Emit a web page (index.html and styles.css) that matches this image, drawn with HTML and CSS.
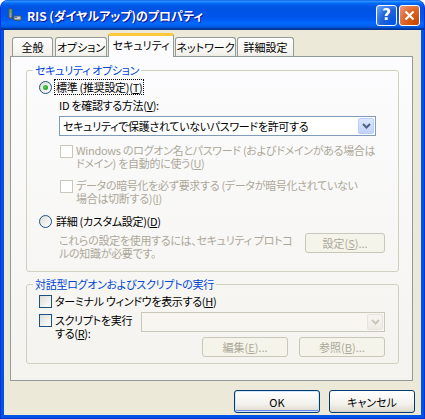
FILE: index.html
```html
<!DOCTYPE html>
<html lang="ja">
<head>
<meta charset="UTF-8" />
<meta name="viewport" content="width=device-width, initial-scale=1.0">
<title>RIS (ダイヤルアップ)のプロパティ</title>
<link rel="stylesheet" href="styles.css">
</head>
<body>
<div class="window">
  <div class="titlebar">
    <svg class="app-icon" width="16" height="16" viewBox="0 0 16 16">
      <path d="M2 2h3v9H2z" fill="#9aa7a0" stroke="#4b5a55" stroke-width="1"/>
      <path d="M3 3h1v3H3z" fill="#3fbf3f"/>
      <path d="M5 11c2 0 2 2 4 2h5" fill="none" stroke="#4b5a55" stroke-width="1"/>
      <path d="M7 9h7v4H7z" fill="#c9d0cc" stroke="#4b5a55" stroke-width="1"/>
      <path d="M8 10h2v1H8z" fill="#3a6fd8"/>
    </svg>
    <span class="title">RIS (ダイヤルアップ)のプロパティ</span>
    <div class="caption-btns">
      <button class="cap help">?</button>
      <button class="cap close">
        <svg width="11" height="11" viewBox="0 0 11 11"><path d="M1.5 1.5l8 8M9.5 1.5l-8 8" stroke="#fff" stroke-width="2.2"/></svg>
      </button>
    </div>
  </div>

  <div class="client">
    <div class="tabs">
      <div class="tab t1">全般</div>
      <div class="tab t2">オプション</div>
      <div class="tab t3 selected">セキュリティ</div>
      <div class="tab t4">ネットワーク</div>
      <div class="tab t5">詳細設定</div>
    </div>

    <div class="panel">
      <fieldset class="group g1">
        <legend>セキュリティ オプション</legend>
        <label class="radio-row">
          <span class="radio checked"></span>
          <span class="focus">標準 (推奨設定)(<u>T</u>)</span>
        </label>
        <div class="field-label">ID を確認する方法(<u>V</u>):</div>
        <div class="select">
          <span class="select-text">セキュリティで保護されていないパスワードを許可する</span>
          <span class="drop">
            <svg width="9" height="6" viewBox="0 0 9 6"><path d="M1 1l3.5 3.5L8 1" fill="none" stroke="#4d6185" stroke-width="2"/></svg>
          </span>
        </div>
        <div class="check-row disabled c1">
          <span class="box"></span>
          <span class="check-text">Windows のログオン名とパスワード (およびドメインがある場合は<br>ドメイン) を自動的に使う(<u>U</u>)</span>
        </div>
        <div class="check-row disabled c2">
          <span class="box"></span>
          <span class="check-text">データの暗号化を必ず要求する (データが暗号化されていない<br>場合は切断する)(<u>I</u>)</span>
        </div>
        <label class="radio-row r2">
          <span class="radio"></span>
          <span class="plain">詳細 (カスタム設定)(<u>D</u>)</span>
        </label>
        <div class="adv">
          <p class="note">これらの設定を使用するには、セキュリティ プロトコ<br>ルの知識が必要です。</p>
          <button class="btn small" disabled>設定(<u>S</u>)...</button>
        </div>
      </fieldset>

      <fieldset class="group g2">
        <legend>対話型ログオンおよびスクリプトの実行</legend>
        <div class="check-row single">
          <span class="box"></span>
          <span class="check-text">ターミナル ウィンドウを表示する(<u>H</u>)</span>
        </div>
        <div class="script-row">
          <div class="check-row script">
            <span class="box"></span>
            <span class="check-text">スクリプトを実行<br>する(<u>R</u>):</span>
          </div>
          <div class="script-side">
            <div class="select off">
              <span class="select-text"></span>
              <span class="drop">
                <svg width="9" height="6" viewBox="0 0 9 6"><path d="M1 1l3.5 3.5L8 1" fill="none" stroke="#c9c7ba" stroke-width="2"/></svg>
              </span>
            </div>
            <div class="side-btns">
              <button class="btn small" disabled>編集(<u>E</u>)...</button>
              <button class="btn small" disabled>参照(<u>B</u>)...</button>
            </div>
          </div>
        </div>
      </fieldset>
    </div>

    <div class="footer">
      <button class="btn default">OK</button>
      <button class="btn">キャンセル</button>
    </div>
  </div>
</div>
</body>
</html>
```

FILE: styles.css
```css
body {
  margin: 0;
  font-family: "Noto Sans CJK JP", sans-serif;
  font-size: 11px;
  font-feature-settings: "palt";
  color: #000;
}
.window {
  width: 425px;
  height: 419px;
  box-sizing: border-box;
  display: flex;
  flex-direction: column;
  background: #0054e3;
  border-radius: 8px 8px 0 0;
  border: 1px solid #0831d9;
  border-top: none;
}
.titlebar {
  height: 30px;
  flex-shrink: 0;
  display: flex;
  align-items: center;
  padding: 0 4px 0 6px;
  border-radius: 8px 8px 0 0;
  background: linear-gradient(to bottom, #0058ee 0%, #3593ff 4%, #288eff 6%, #127dff 8%, #036ffc 10%, #0262ee 14%, #0057e5 20%, #0054e3 24%, #0055eb 56%, #005bf5 66%, #026afe 76%, #0062ef 86%, #0052d6 92%, #0040ab 94%, #003092 100%);
}
.app-icon {
  margin-right: 4px;
}
.title {
  color: #fff;
  font-weight: bold;
  font-size: 12px;
  text-shadow: 1px 1px #0f1089;
  flex: 1;
}
.caption-btns {
  display: flex;
  gap: 2px;
}
.cap {
  width: 21px;
  height: 21px;
  padding: 0;
  border: 1px solid #fff;
  border-radius: 3px;
  display: flex;
  align-items: center;
  justify-content: center;
  color: #fff;
  font-family: "DejaVu Sans", sans-serif;
  font-weight: bold;
  font-size: 15px;
}
.help {
  background: radial-gradient(circle at 90% 90%, #0054e9 0%, #2263d5 55%, #4484f2 75%, #78a8ff 100%);
}
.close {
  background: radial-gradient(circle at 90% 90%, #cc4600 0%, #dc6527 55%, #e7825b 80%, #f29a7a 100%);
}
.client {
  flex: 1;
  margin: 0 3px 3px;
  background: #ece9d8;
  padding-top: 3px;
  display: flex;
  flex-direction: column;
}
.tabs {
  display: flex;
  align-items: flex-end;
  height: 24px;
  margin-bottom: -1px;
  padding-left: 8px;
  white-space: nowrap;
}
.tab {
  height: 20px;
  box-sizing: border-box;
  border: 1px solid #919b9c;
  border-bottom: none;
  border-radius: 3px 3px 0 0;
  background: linear-gradient(#fefefe, #f4f3ee 80%, #e9e8e1);
  text-align: center;
  line-height: 18px;
  margin-left: 1px;
}
.t1 { width: 41px; margin-left: 0; }
.t2 { width: 52px; margin-left: 2px; }
.t3 { width: 66px; }
.t4 { width: 61px; }
.t5 { width: 57px; }
.tab.selected {
  height: 24px;
  background: #fcfcfe;
  border-top: 3px solid #ffc83c;
  line-height: 19px;
  position: relative;
  z-index: 1;
}
.panel {
  margin-left: 6px;
  width: 403px;
  height: 325px;
  box-sizing: border-box;
  border: 1px solid #919b9c;
  background: linear-gradient(#fcfcfe, #f4f3ee);
  padding: 6px 0 0 15px;
  white-space: nowrap;
  letter-spacing: -0.3px;
}
.group {
  margin: 0;
  width: 373px;
  box-sizing: border-box;
  border: 1px solid #d0d0bf;
  border-radius: 3px;
  padding: 3px 13px 11px 12px;
  min-inline-size: 0;
}
.group legend {
  padding: 0 2px;
  margin-left: -6px;
  color: #0046d5;
  line-height: 14px;
}
.g2 {
  margin-top: 5px;
  padding-bottom: 6px;
}
u {
  text-decoration: underline;
  text-underline-offset: 1px;
}
.radio-row {
  display: flex;
  align-items: center;
  height: 14px;
  line-height: 14px;
}
.radio {
  width: 13px;
  height: 13px;
  box-sizing: border-box;
  border: 1px solid #1c5180;
  border-radius: 50%;
  background: linear-gradient(135deg, #dcdcd7, #ffffff);
  margin-right: 3px;
  display: flex;
  align-items: center;
  justify-content: center;
}
.radio.checked::after {
  content: "";
  width: 5px;
  height: 5px;
  border-radius: 50%;
  background: radial-gradient(circle at 40% 40%, #55d551, #21a121 70%);
}
.focus {
  outline: 1px dotted #000;
  padding: 0 1px;
}
.plain {
  padding-left: 1px;
}
.field-label {
  margin: 4px 0 0 20px;
  line-height: 14px;
}
.select {
  margin: 4px 0 0 20px;
  width: 317px;
  height: 20px;
  box-sizing: border-box;
  border: 1px solid #7f9db9;
  background: #fff;
  display: flex;
  align-items: center;
  padding: 1px;
}
.select-text {
  flex: 1;
  padding-left: 2px;
  line-height: 16px;
}
.drop {
  width: 16px;
  height: 16px;
  box-sizing: border-box;
  border-radius: 2px;
  border: 1px solid #b9cdf9;
  background: linear-gradient(#dce7ff, #c1d3fb);
  display: flex;
  align-items: center;
  justify-content: center;
}
.select.off {
  margin: 0;
  width: 244px;
  border-color: #c9c7ba;
  background: #f7f6f1;
}
.select.off .drop {
  border-color: #e6e4dc;
  background: linear-gradient(#f6f5f0, #ecebe4);
}
.check-row {
  display: flex;
  align-items: flex-start;
  line-height: 13px;
}
.box {
  width: 13px;
  height: 13px;
  flex-shrink: 0;
  box-sizing: border-box;
  border: 1px solid #1c5180;
  background: linear-gradient(135deg, #dcdcd7, #ffffff);
  margin: 1px 3px 0 0;
}
.check-row.disabled {
  color: #aca899;
  margin-left: 21px;
}
.check-row.disabled .box {
  border-color: #cac8bb;
  background: #fff;
  margin-right: 3px;
}
.c1 { margin-top: 8px; }
.c2 { margin-top: 9px; }
.r2 { margin-top: 9px; }
.adv {
  display: flex;
  align-items: flex-start;
  margin-top: 5px;
}
.note {
  margin: 1px 0 0 20px;
  line-height: 13px;
  color: #aca899;
  flex: 1;
}
.btn {
  width: 86px;
  height: 23px;
  box-sizing: border-box;
  border: 1px solid #003c74;
  border-radius: 3px;
  background: linear-gradient(#ffffff, #f3f2ed 60%, #e3e0d5 90%, #d6d0c5);
  font-family: inherit;
  font-size: 11px;
  font-feature-settings: "palt";
  color: #000;
  padding: 0;
}
.btn.small {
  width: 80px;
  height: 20px;
  line-height: 16px;
}
.btn:disabled {
  border-color: #c9c7ba;
  background: #f5f4ea;
  color: #aca899;
}
.btn.default {
  box-shadow: inset 0 0 0 1px #cee7ff, inset 0 -1px 0 1px #6982ee;
}
.check-row.single {
  height: 14px;
  line-height: 14px;
  align-items: center;
}
.check-row.single .box {
  margin-top: 0;
}
.script-row {
  display: flex;
  margin-top: 4px;
}
.check-row.script {
  margin-top: 2px;
}
.check-row.script .box {
  margin-top: 0;
}
.script-side {
  margin-left: auto;
  width: 244px;
}
.side-btns {
  display: flex;
  justify-content: flex-end;
  gap: 11px;
  margin-top: 5px;
}
.side-btns .btn {
  width: 86px;
}
.footer {
  display: flex;
  justify-content: flex-end;
  gap: 9px;
  margin-top: 9px;
  padding-right: 6px;
}
```
